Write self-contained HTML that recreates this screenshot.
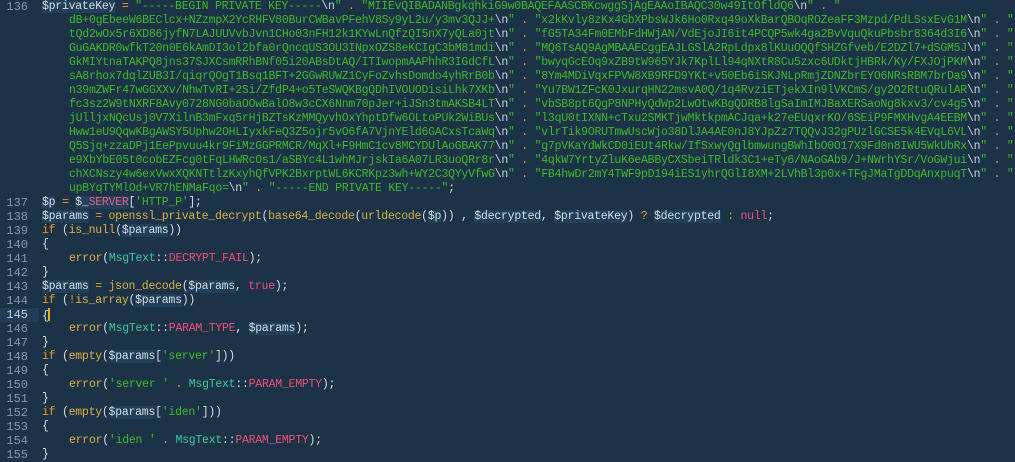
<!DOCTYPE html>
<html><head><meta charset="utf-8"><style>
html,body{margin:0;padding:0;background:#1b3247;width:1015px;height:462px;overflow:hidden}
#c{position:relative;font-family:"Liberation Mono",monospace;font-size:11.5px;letter-spacing:-0.25px;color:#d6dde6}
.r{position:absolute;left:0;height:14px;line-height:14px;white-space:pre;width:1015px}
.n{position:absolute;left:0;width:28px;text-align:right;color:#8797a6;font-size:12px;letter-spacing:0}
.t{position:absolute;left:42px}
.w{position:absolute;left:69px}
.s{color:#3fb82a}.e{color:#c9d3dc}.o{color:#e89a2c}.f{color:#d9b04a}.k{color:#e39a2a}
.v{color:#d6dde6;background:#213f58}.m{color:#3cc79c}.p{color:#ef4f7a}.g{color:#e85f88}
.act{background:#213d57}
</style></head><body><div id="c">
<div class="r" style="top:0"><span class="n">136</span><span class="t"><span class="v">$privateKey</span> <span class="o">=</span> <span class="s">"-----BEGIN PRIVATE KEY-----</span><span class="e">\n</span><span class="s">"</span> <span class="o">.</span> <span class="s">"MIIEvQIBADANBgkqhkiG9w0BAQEFAASCBKcwggSjAgEAAoIBAQC30w49ItOfldQ6</span><span class="e">\n</span><span class="s">"</span> <span class="o">.</span> <span class="s">"</span></span></div>
<div class="r" style="top:14px"><span class="w"><span class="s">dB+0gEbeeW6BEClcx+NZzmpX2YcRHFV80BurCWBavPFehV8Sy9yL2u/y3mv3QJJ+</span><span class="e">\n</span><span class="s">"</span> <span class="o">.</span> <span class="s">"x2kKvly8zKx4GbXPbsWJk6Ho0Rxq49oXkBarQBOqROZeaFF3Mzpd/PdLSsxEvG1M</span><span class="e">\n</span><span class="s">"</span> <span class="o">.</span> <span class="s">"</span></span></div>
<div class="r" style="top:28px"><span class="w"><span class="s">tQd2wOx5r6XD86jyfN7LAJUUVvbJvn1CHo03nFH12k1KYwLnQfzQI5nX7yQLa0jt</span><span class="e">\n</span><span class="s">"</span> <span class="o">.</span> <span class="s">"fG5TA34Fm0EMbFdHWjAN/VdEjoJI6it4PCQP5wk4ga2BvVquQkuPbsbr8364d3I6</span><span class="e">\n</span><span class="s">"</span> <span class="o">.</span> <span class="s">"</span></span></div>
<div class="r" style="top:42px"><span class="w"><span class="s">GuGAKDR0wfkT20n0E6kAmDI3ol2bfa0rQncqUS3OU3INpxOZS8eKCIgC3bM81mdi</span><span class="e">\n</span><span class="s">"</span> <span class="o">.</span> <span class="s">"MQ6TsAQ9AgMBAAECggEAJLGSlA2RpLdpx8lKUuOQQfSHZGfveb/E2DZl7+dSGM5J</span><span class="e">\n</span><span class="s">"</span> <span class="o">.</span> <span class="s">"</span></span></div>
<div class="r" style="top:56px"><span class="w"><span class="s">GkMIYtnaTAKPQ8jns37SJXCsmRRhBNf05i20ABsDtAQ/ITIwopmAAPhhR3IGdCfL</span><span class="e">\n</span><span class="s">"</span> <span class="o">.</span> <span class="s">"bwyqGcEOq9xZB9tW965YJk7KplLl94qNXtR8Cu5zxc6UDktjHBRk/Ky/FXJOjPKM</span><span class="e">\n</span><span class="s">"</span> <span class="o">.</span> <span class="s">"</span></span></div>
<div class="r" style="top:70px"><span class="w"><span class="s">sA8rhox7dqlZUB3I/qiqrQOgT1Bsq1BFT+2GGwRUWZ1CyFoZvhsDomdo4yhRrB0b</span><span class="e">\n</span><span class="s">"</span> <span class="o">.</span> <span class="s">"8Ym4MDiVqxFPVW8XB9RFD9YKt+v50Eb6iSKJNLpRmjZDNZbrEYO6NRsRBM7brDa9</span><span class="e">\n</span><span class="s">"</span> <span class="o">.</span> <span class="s">"</span></span></div>
<div class="r" style="top:84px"><span class="w"><span class="s">n39mZWFr47wGGXXv/NhwTvRI+2Si/ZfdP4+o5TeSWQKBgQDhIVOUODisiLhk7XKb</span><span class="e">\n</span><span class="s">"</span> <span class="o">.</span> <span class="s">"Yu7BW1ZFcK0JxurqHN22msvA0Q/1q4RvziETjekXIn9lVKCmS/gy2O2RtuQRulAR</span><span class="e">\n</span><span class="s">"</span> <span class="o">.</span> <span class="s">"</span></span></div>
<div class="r" style="top:98px"><span class="w"><span class="s">fc3sz2W9tNXRF8Avy0728NG0baOOwBalO8w3cCX6Nnm70pJer+iJSn3tmAKSB4LT</span><span class="e">\n</span><span class="s">"</span> <span class="o">.</span> <span class="s">"vbSB8pt6QgP8NPHyQdWp2LwOtwKBgQDRB8lgSaImIMJBaXERSaoNg8kxv3/cv4g5</span><span class="e">\n</span><span class="s">"</span> <span class="o">.</span> <span class="s">"</span></span></div>
<div class="r" style="top:112px"><span class="w"><span class="s">jUlljxNQcUsj0V7XilnB3mFxq5rHjBZTsKzMMQyvhOxYhptDfw6OLtoPUk2WiBUs</span><span class="e">\n</span><span class="s">"</span> <span class="o">.</span> <span class="s">"l3qU0tIXNN+cTxu2SMKTjwMktkpmACJqa+k27eEUqxrKO/6SEiP9FMXHvgA4EEBM</span><span class="e">\n</span><span class="s">"</span> <span class="o">.</span> <span class="s">"</span></span></div>
<div class="r" style="top:126px"><span class="w"><span class="s">Hww1eU9QqwKBgAWSY5Uphw2OHLIyxkFeQ3Z5ojr5vO6fA7VjnYEld6GACxsTcaWq</span><span class="e">\n</span><span class="s">"</span> <span class="o">.</span> <span class="s">"vlrTik9ORUTmwUscWjo38DlJA4AE0nJ8YJpZz7TQQvJ32gPUzlGCSE5k4EVqL6VL</span><span class="e">\n</span><span class="s">"</span> <span class="o">.</span> <span class="s">"</span></span></div>
<div class="r" style="top:140px"><span class="w"><span class="s">Q5Sjq+zzaDPj1EePpvuu4kr9FiMzGGPRMCR/MqXl+F9HmC1cv8MCYDUlAoGBAK77</span><span class="e">\n</span><span class="s">"</span> <span class="o">.</span> <span class="s">"g7pVKaYdWkCD0iEUt4Rkw/IfSxwyQglbmwungBWhIbO0O17X9Fd0n8IWU5WkUbRx</span><span class="e">\n</span><span class="s">"</span> <span class="o">.</span> <span class="s">"</span></span></div>
<div class="r" style="top:154px"><span class="w"><span class="s">e9XbYbE05t0cobEZFcg0tFqLHWRcOs1/aSBYc4L1whMJrjskIa6A07LR3uoQRr8r</span><span class="e">\n</span><span class="s">"</span> <span class="o">.</span> <span class="s">"4qkW7YrtyZluK6eABByCXSbeiTRldk3C1+eTy6/NAoGAb9/J+NWrhYSr/VoGWjui</span><span class="e">\n</span><span class="s">"</span> <span class="o">.</span> <span class="s">"</span></span></div>
<div class="r" style="top:168px"><span class="w"><span class="s">chXCNszy4w6exVwxXQKNTtlzKxyhQfVPK2BxrptWL6KCRKpz3wh+WY2C3QYyVfwG</span><span class="e">\n</span><span class="s">"</span> <span class="o">.</span> <span class="s">"FB4hwDr2mY4TWF9pD194iES1yhrQGlI8XM+2LVhBl3p0x+TFgJMaTgDDqAnxpuqT</span><span class="e">\n</span><span class="s">"</span> <span class="o">.</span> <span class="s">"</span></span></div>
<div class="r" style="top:182px"><span class="w"><span class="s">upBYqTYMlOd+VR7hENMaFqo=</span><span class="e">\n</span><span class="s">"</span> <span class="o">.</span> <span class="s">"-----END PRIVATE KEY-----"</span>;</span></div>

<div class="r" style="top:196px"><span class="n">137</span><span class="t"><span class="v">$p</span> <span class="o">=</span> <span class="v">$_<span class="g">SERVER</span></span>[<span class="s">'HTTP_P'</span>];</span></div>
<div class="r" style="top:210px"><span class="n">138</span><span class="t"><span class="v">$params</span> <span class="o">=</span> <span class="f">openssl_private_decrypt</span>(<span class="f">base64_decode</span>(<span class="f">urldecode</span>(<span class="v">$p</span>)) , <span class="v">$decrypted</span>, <span class="v">$privateKey</span>) <span class="o">?</span> <span class="v">$decrypted</span> <span class="o">:</span> <span class="p">null</span>;</span></div>
<div class="r" style="top:224px"><span class="n">139</span><span class="t"><span class="k">if</span> (<span class="f">is_null</span>(<span class="v">$params</span>))</span></div>
<div class="r" style="top:238px"><span class="n">140</span><span class="t">{</span></div>
<div class="r" style="top:252px"><span class="n">141</span><span class="w"><span class="f">error</span>(<span class="m">MsgText</span>::<span class="p">DECRYPT_FAIL</span>);</span></div>
<div class="r" style="top:266px"><span class="n">142</span><span class="t">}</span></div>
<div class="r" style="top:280px"><span class="n">143</span><span class="t"><span class="v">$params</span> <span class="o">=</span> <span class="f">json_decode</span>(<span class="v">$params</span>, <span class="p">true</span>);</span></div>
<div class="r" style="top:294px"><span class="n">144</span><span class="t"><span class="k">if</span> (<span class="o">!</span><span class="f">is_array</span>(<span class="v">$params</span>))</span></div>
<div class="r" style="top:308px"><span class="act" style="position:absolute;left:0;width:39px;height:14px"></span><span class="n" style="color:#c5d0da">145</span><span class="t">{<span style="display:inline-block;width:2px;height:13px;background:#e8b020;vertical-align:-2px;margin-left:-1px"></span></span></div>
<div class="r" style="top:322px"><span class="n">146</span><span class="w"><span class="f">error</span>(<span class="m">MsgText</span>::<span class="p">PARAM_TYPE</span>, <span class="v">$params</span>);</span></div>
<div class="r" style="top:336px"><span class="n">147</span><span class="t">}</span></div>
<div class="r" style="top:350px"><span class="n">148</span><span class="t"><span class="k">if</span> (<span class="f">empty</span>(<span class="v">$params</span>[<span class="s">'server'</span>]))</span></div>
<div class="r" style="top:364px"><span class="n">149</span><span class="t">{</span></div>
<div class="r" style="top:378px"><span class="n">150</span><span class="w"><span class="f">error</span>(<span class="s">'server '</span> <span class="o">.</span> <span class="m">MsgText</span>::<span class="p">PARAM_EMPTY</span>);</span></div>
<div class="r" style="top:392px"><span class="n">151</span><span class="t">}</span></div>
<div class="r" style="top:406px"><span class="n">152</span><span class="t"><span class="k">if</span> (<span class="f">empty</span>(<span class="v">$params</span>[<span class="s">'iden'</span>]))</span></div>
<div class="r" style="top:420px"><span class="n">153</span><span class="t">{</span></div>
<div class="r" style="top:434px"><span class="n">154</span><span class="w"><span class="f">error</span>(<span class="s">'iden '</span> <span class="o">.</span> <span class="m">MsgText</span>::<span class="p">PARAM_EMPTY</span>);</span></div>
<div class="r" style="top:448px"><span class="n">155</span><span class="t">}</span></div>
</div></body></html>
